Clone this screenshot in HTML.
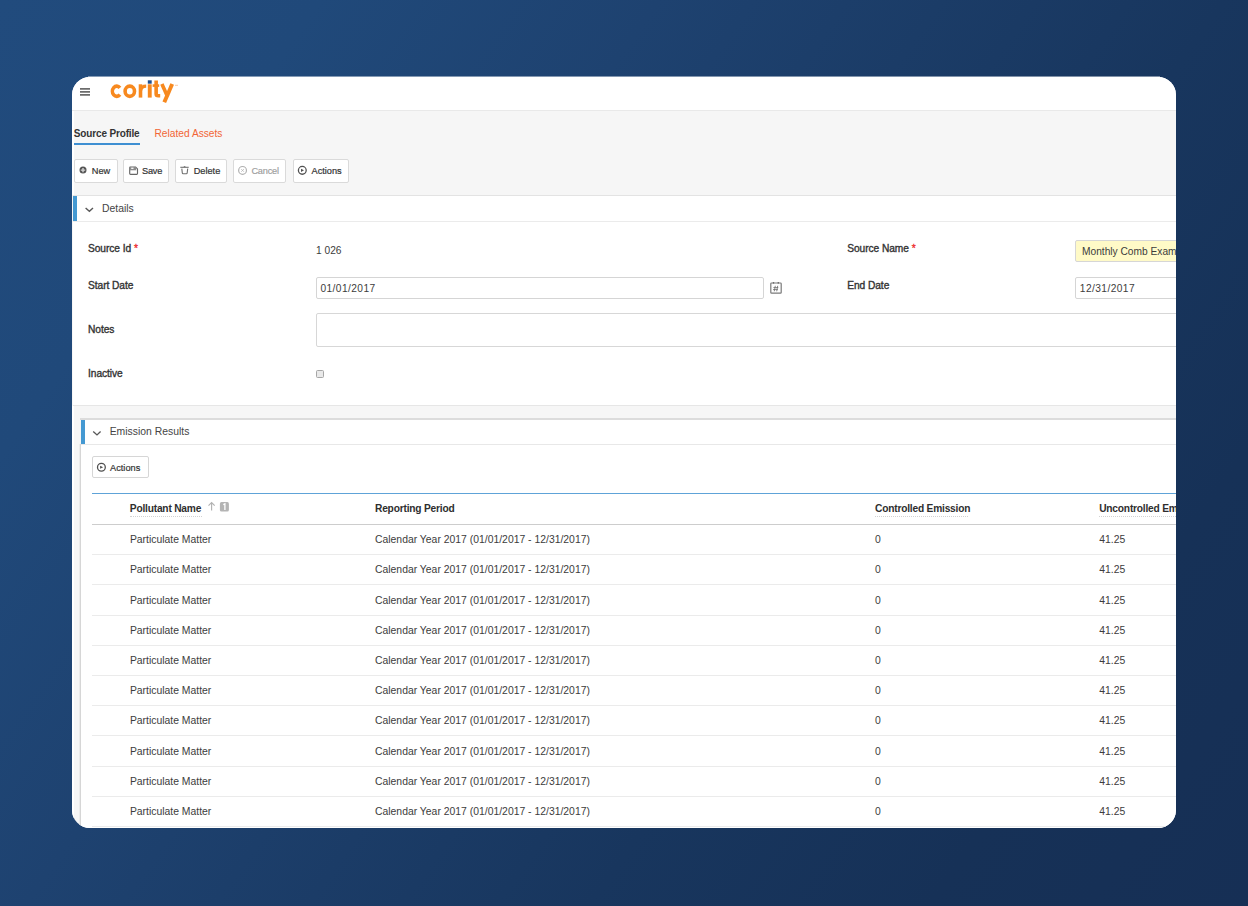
<!DOCTYPE html>
<html><head><meta charset="utf-8">
<style>
html,body{margin:0;padding:0;}
body{width:1248px;height:906px;overflow:hidden;position:relative;
background:linear-gradient(125deg,rgb(33,75,125) 0%,rgb(32,73,122) 17%,rgb(30,66,112) 35%,rgb(24,54,94) 65%,rgb(22,49,87) 83%,rgb(22,47,85) 100%);
font-family:"Liberation Sans",sans-serif;}
.card{position:absolute;left:72px;top:77px;width:1104px;height:751px;border-radius:18px;overflow:hidden;background:#f6f6f6;}
.t{position:absolute;white-space:nowrap;line-height:1;}
.r{position:absolute;}
.ov{position:absolute;left:0;top:0;}
.req{color:#ee2c2c;-webkit-text-stroke:0.3px #ee2c2c;}
</style></head><body>
<div class="card">
<div class="r" style="left:0.00px;top:0.00px;width:1104.00px;height:32.50px;background:#fff;"></div>
<div class="r" style="left:0.00px;top:32.50px;width:1104.00px;height:1.00px;background:#e9e9e9;"></div>
<div class="r" style="left:0.00px;top:33.50px;width:1.80px;height:84.50px;background:#fff;"></div>
<div class="r" style="left:0.00px;top:329.00px;width:1.80px;height:422.00px;background:#fff;"></div>
<div class="t" style="left:1.80px;top:52.44px;font-size:10.0px;color:#333;font-weight:bold;letter-spacing:-0.15px;">Source Profile</div>
<div class="r" style="left:1.50px;top:66.00px;width:66.00px;height:2.00px;background:#3e8fd2;"></div>
<div class="t" style="left:82.50px;top:52.27px;font-size:10.2px;color:#f26535;font-weight:normal;">Related Assets</div>
<div class="r" style="left:1.50px;top:82.00px;width:44.00px;height:24.00px;background:#fff;border:1px solid #dadada;border-radius:2px;box-sizing:border-box;"></div>
<div class="r" style="left:51.00px;top:82.00px;width:45.50px;height:24.00px;background:#fff;border:1px solid #dadada;border-radius:2px;box-sizing:border-box;"></div>
<div class="r" style="left:103.00px;top:82.00px;width:51.70px;height:24.00px;background:#fff;border:1px solid #dadada;border-radius:2px;box-sizing:border-box;"></div>
<div class="r" style="left:161.30px;top:82.00px;width:52.70px;height:24.00px;background:#fff;border:1px solid #dadada;border-radius:2px;box-sizing:border-box;"></div>
<div class="r" style="left:221.00px;top:82.00px;width:55.70px;height:24.00px;background:#fff;border:1px solid #dadada;border-radius:2px;box-sizing:border-box;"></div>
<div class="t" style="left:19.80px;top:90.01px;font-size:9.2px;color:#333;font-weight:normal;-webkit-text-stroke:0.2px #333;">New</div>
<div class="t" style="left:70.00px;top:90.01px;font-size:9.2px;color:#333;font-weight:normal;letter-spacing:-0.2px;-webkit-text-stroke:0.2px #333;">Save</div>
<div class="t" style="left:121.70px;top:90.01px;font-size:9.2px;color:#333;font-weight:normal;-webkit-text-stroke:0.2px #333;">Delete</div>
<div class="t" style="left:179.40px;top:90.01px;font-size:9.2px;color:#9c9c9c;font-weight:normal;letter-spacing:-0.2px;-webkit-text-stroke:0.15px #9c9c9c;">Cancel</div>
<div class="t" style="left:239.50px;top:90.01px;font-size:9.2px;color:#333;font-weight:normal;-webkit-text-stroke:0.2px #333;">Actions</div>
<div class="r" style="left:1.00px;top:118.00px;width:1103.00px;height:1.00px;background:#e3e3e3;"></div>
<div class="r" style="left:1.00px;top:119.00px;width:1103.00px;height:25.00px;background:#fff;"></div>
<div class="r" style="left:1.00px;top:119.00px;width:4.00px;height:25.00px;background:#4499d2;"></div>
<div class="r" style="left:1.00px;top:144.00px;width:1103.00px;height:1.00px;background:#ebebeb;"></div>
<div class="t" style="left:30.00px;top:127.00px;font-size:10.4px;color:#444;font-weight:normal;">Details</div>
<div class="r" style="left:1.00px;top:145.00px;width:1103.00px;height:183.00px;background:#fff;"></div>
<div class="r" style="left:1.00px;top:328.00px;width:1103.00px;height:1.00px;background:#e6e6e6;"></div>
<div class="t" style="left:16.00px;top:166.97px;font-size:10.2px;color:#333;font-weight:normal;-webkit-text-stroke:0.35px #333;letter-spacing:-0.05px;">Source Id <span class="req">*</span></div>
<div class="t" style="left:244.00px;top:168.67px;font-size:10.2px;color:#3c3c3c;font-weight:normal;">1 026</div>
<div class="t" style="left:775.20px;top:166.97px;font-size:10.2px;color:#333;font-weight:normal;-webkit-text-stroke:0.35px #333;letter-spacing:-0.05px;">Source Name <span class="req">*</span></div>
<div class="r" style="left:1003.40px;top:163.20px;width:124.60px;height:21.80px;background:#fffac7;border:1px solid #d6d6d6;border-radius:2px;box-sizing:border-box;"></div>
<div class="t" style="left:1010.00px;top:170.17px;font-size:10.2px;color:#3c3c3c;font-weight:normal;">Monthly Comb Example</div>
<div class="t" style="left:16.00px;top:203.67px;font-size:10.2px;color:#333;font-weight:normal;-webkit-text-stroke:0.35px #333;letter-spacing:-0.05px;">Start Date</div>
<div class="r" style="left:244.00px;top:200.00px;width:448.00px;height:22.00px;background:#fff;border:1px solid #d5d5d5;border-radius:2px;box-sizing:border-box;"></div>
<div class="t" style="left:248.40px;top:206.67px;font-size:10.2px;color:#3c3c3c;font-weight:normal;letter-spacing:0.42px;">01/01/2017</div>
<div class="t" style="left:775.20px;top:203.67px;font-size:10.2px;color:#333;font-weight:normal;-webkit-text-stroke:0.35px #333;letter-spacing:-0.05px;">End Date</div>
<div class="r" style="left:1003.40px;top:200.00px;width:124.60px;height:22.00px;background:#fff;border:1px solid #d5d5d5;border-radius:2px;box-sizing:border-box;"></div>
<div class="t" style="left:1007.80px;top:206.67px;font-size:10.2px;color:#3c3c3c;font-weight:normal;letter-spacing:0.42px;">12/31/2017</div>
<div class="t" style="left:16.00px;top:247.77px;font-size:10.2px;color:#333;font-weight:normal;-webkit-text-stroke:0.35px #333;letter-spacing:-0.05px;">Notes</div>
<div class="r" style="left:243.50px;top:236.40px;width:884.50px;height:33.60px;background:#fff;border:1px solid #d7d7d7;border-radius:2px;box-sizing:border-box;"></div>
<div class="t" style="left:16.00px;top:292.17px;font-size:10.2px;color:#333;font-weight:normal;-webkit-text-stroke:0.35px #333;letter-spacing:-0.05px;">Inactive</div>
<div class="r" style="left:244.00px;top:293.00px;width:8.00px;height:8.00px;background:#e9e9e9;border:1px solid #a6a6a6;border-radius:1.5px;box-sizing:border-box;"></div>
<div class="r" style="left:9.00px;top:343.00px;width:1095.00px;height:408.00px;background:#fff;"></div>
<div class="r" style="left:8.00px;top:341.00px;width:1096.00px;height:2.00px;background:#dcdcdc;"></div>
<div class="r" style="left:8.00px;top:367.00px;width:1.00px;height:384.00px;background:#d6d6d6;"></div>
<div class="r" style="left:7.00px;top:367.00px;width:1.00px;height:384.00px;background:#ebebeb;"></div>
<div class="r" style="left:9.00px;top:343.00px;width:4.00px;height:24.00px;background:#4499d2;"></div>
<div class="r" style="left:9.00px;top:367.00px;width:1095.00px;height:1.00px;background:#e8e8e8;"></div>
<div class="t" style="left:37.70px;top:350.30px;font-size:10.4px;color:#444;font-weight:normal;">Emission Results</div>
<div class="r" style="left:20.00px;top:379.20px;width:56.60px;height:22.20px;background:#fff;border:1px solid #d6d6d6;border-radius:2px;box-sizing:border-box;"></div>
<div class="t" style="left:38.10px;top:386.51px;font-size:9.2px;color:#333;font-weight:normal;-webkit-text-stroke:0.2px #333;">Actions</div>
<div class="r" style="left:20.00px;top:416.00px;width:1084.00px;height:1.00px;background:#5ea3d8;"></div>
<div class="t" style="left:57.80px;top:426.97px;font-size:10.2px;color:#2e2e2e;font-weight:bold;letter-spacing:-0.2px;">Pollutant Name</div>
<div class="r" style="left:57.80px;top:438.80px;width:71.90px;height:1.00px;border-top:1px dotted #d2d2d2;box-sizing:border-box;"></div>
<div class="t" style="left:303.00px;top:426.97px;font-size:10.2px;color:#2e2e2e;font-weight:bold;letter-spacing:-0.2px;">Reporting Period</div>
<div class="t" style="left:803.00px;top:426.97px;font-size:10.2px;color:#2e2e2e;font-weight:bold;letter-spacing:-0.2px;">Controlled Emission</div>
<div class="r" style="left:803.00px;top:438.80px;width:92.70px;height:1.00px;border-top:1px dotted #d2d2d2;box-sizing:border-box;"></div>
<div class="t" style="left:1027.20px;top:426.97px;font-size:10.2px;color:#2e2e2e;font-weight:bold;letter-spacing:-0.2px;">Uncontrolled Emission</div>
<div class="r" style="left:1027.20px;top:438.80px;width:90.80px;height:1.00px;border-top:1px dotted #d2d2d2;box-sizing:border-box;"></div>
<div class="r" style="left:20.00px;top:447.00px;width:1084.00px;height:1.20px;background:#cdcdcd;"></div>
<div class="t" style="left:57.90px;top:458.20px;font-size:10.4px;color:#3c3c3c;font-weight:normal;">Particulate Matter</div>
<div class="t" style="left:303.00px;top:458.20px;font-size:10.4px;color:#3c3c3c;font-weight:normal;">Calendar Year 2017 (01/01/2017 - 12/31/2017)</div>
<div class="t" style="left:803.00px;top:458.20px;font-size:10.4px;color:#3c3c3c;font-weight:normal;">0</div>
<div class="t" style="left:1027.20px;top:458.20px;font-size:10.4px;color:#3c3c3c;font-weight:normal;">41.25</div>
<div class="r" style="left:20.00px;top:477.20px;width:1084.00px;height:1.00px;background:#ebebeb;"></div>
<div class="t" style="left:57.90px;top:488.39px;font-size:10.4px;color:#3c3c3c;font-weight:normal;">Particulate Matter</div>
<div class="t" style="left:303.00px;top:488.39px;font-size:10.4px;color:#3c3c3c;font-weight:normal;">Calendar Year 2017 (01/01/2017 - 12/31/2017)</div>
<div class="t" style="left:803.00px;top:488.39px;font-size:10.4px;color:#3c3c3c;font-weight:normal;">0</div>
<div class="t" style="left:1027.20px;top:488.39px;font-size:10.4px;color:#3c3c3c;font-weight:normal;">41.25</div>
<div class="r" style="left:20.00px;top:507.39px;width:1084.00px;height:1.00px;background:#ebebeb;"></div>
<div class="t" style="left:57.90px;top:518.58px;font-size:10.4px;color:#3c3c3c;font-weight:normal;">Particulate Matter</div>
<div class="t" style="left:303.00px;top:518.58px;font-size:10.4px;color:#3c3c3c;font-weight:normal;">Calendar Year 2017 (01/01/2017 - 12/31/2017)</div>
<div class="t" style="left:803.00px;top:518.58px;font-size:10.4px;color:#3c3c3c;font-weight:normal;">0</div>
<div class="t" style="left:1027.20px;top:518.58px;font-size:10.4px;color:#3c3c3c;font-weight:normal;">41.25</div>
<div class="r" style="left:20.00px;top:537.58px;width:1084.00px;height:1.00px;background:#ebebeb;"></div>
<div class="t" style="left:57.90px;top:548.77px;font-size:10.4px;color:#3c3c3c;font-weight:normal;">Particulate Matter</div>
<div class="t" style="left:303.00px;top:548.77px;font-size:10.4px;color:#3c3c3c;font-weight:normal;">Calendar Year 2017 (01/01/2017 - 12/31/2017)</div>
<div class="t" style="left:803.00px;top:548.77px;font-size:10.4px;color:#3c3c3c;font-weight:normal;">0</div>
<div class="t" style="left:1027.20px;top:548.77px;font-size:10.4px;color:#3c3c3c;font-weight:normal;">41.25</div>
<div class="r" style="left:20.00px;top:567.77px;width:1084.00px;height:1.00px;background:#ebebeb;"></div>
<div class="t" style="left:57.90px;top:578.96px;font-size:10.4px;color:#3c3c3c;font-weight:normal;">Particulate Matter</div>
<div class="t" style="left:303.00px;top:578.96px;font-size:10.4px;color:#3c3c3c;font-weight:normal;">Calendar Year 2017 (01/01/2017 - 12/31/2017)</div>
<div class="t" style="left:803.00px;top:578.96px;font-size:10.4px;color:#3c3c3c;font-weight:normal;">0</div>
<div class="t" style="left:1027.20px;top:578.96px;font-size:10.4px;color:#3c3c3c;font-weight:normal;">41.25</div>
<div class="r" style="left:20.00px;top:597.96px;width:1084.00px;height:1.00px;background:#ebebeb;"></div>
<div class="t" style="left:57.90px;top:609.15px;font-size:10.4px;color:#3c3c3c;font-weight:normal;">Particulate Matter</div>
<div class="t" style="left:303.00px;top:609.15px;font-size:10.4px;color:#3c3c3c;font-weight:normal;">Calendar Year 2017 (01/01/2017 - 12/31/2017)</div>
<div class="t" style="left:803.00px;top:609.15px;font-size:10.4px;color:#3c3c3c;font-weight:normal;">0</div>
<div class="t" style="left:1027.20px;top:609.15px;font-size:10.4px;color:#3c3c3c;font-weight:normal;">41.25</div>
<div class="r" style="left:20.00px;top:628.15px;width:1084.00px;height:1.00px;background:#ebebeb;"></div>
<div class="t" style="left:57.90px;top:639.34px;font-size:10.4px;color:#3c3c3c;font-weight:normal;">Particulate Matter</div>
<div class="t" style="left:303.00px;top:639.34px;font-size:10.4px;color:#3c3c3c;font-weight:normal;">Calendar Year 2017 (01/01/2017 - 12/31/2017)</div>
<div class="t" style="left:803.00px;top:639.34px;font-size:10.4px;color:#3c3c3c;font-weight:normal;">0</div>
<div class="t" style="left:1027.20px;top:639.34px;font-size:10.4px;color:#3c3c3c;font-weight:normal;">41.25</div>
<div class="r" style="left:20.00px;top:658.34px;width:1084.00px;height:1.00px;background:#ebebeb;"></div>
<div class="t" style="left:57.90px;top:669.53px;font-size:10.4px;color:#3c3c3c;font-weight:normal;">Particulate Matter</div>
<div class="t" style="left:303.00px;top:669.53px;font-size:10.4px;color:#3c3c3c;font-weight:normal;">Calendar Year 2017 (01/01/2017 - 12/31/2017)</div>
<div class="t" style="left:803.00px;top:669.53px;font-size:10.4px;color:#3c3c3c;font-weight:normal;">0</div>
<div class="t" style="left:1027.20px;top:669.53px;font-size:10.4px;color:#3c3c3c;font-weight:normal;">41.25</div>
<div class="r" style="left:20.00px;top:688.53px;width:1084.00px;height:1.00px;background:#ebebeb;"></div>
<div class="t" style="left:57.90px;top:699.72px;font-size:10.4px;color:#3c3c3c;font-weight:normal;">Particulate Matter</div>
<div class="t" style="left:303.00px;top:699.72px;font-size:10.4px;color:#3c3c3c;font-weight:normal;">Calendar Year 2017 (01/01/2017 - 12/31/2017)</div>
<div class="t" style="left:803.00px;top:699.72px;font-size:10.4px;color:#3c3c3c;font-weight:normal;">0</div>
<div class="t" style="left:1027.20px;top:699.72px;font-size:10.4px;color:#3c3c3c;font-weight:normal;">41.25</div>
<div class="r" style="left:20.00px;top:718.72px;width:1084.00px;height:1.00px;background:#ebebeb;"></div>
<div class="t" style="left:57.90px;top:729.91px;font-size:10.4px;color:#3c3c3c;font-weight:normal;">Particulate Matter</div>
<div class="t" style="left:303.00px;top:729.91px;font-size:10.4px;color:#3c3c3c;font-weight:normal;">Calendar Year 2017 (01/01/2017 - 12/31/2017)</div>
<div class="t" style="left:803.00px;top:729.91px;font-size:10.4px;color:#3c3c3c;font-weight:normal;">0</div>
<div class="t" style="left:1027.20px;top:729.91px;font-size:10.4px;color:#3c3c3c;font-weight:normal;">41.25</div>
<div class="r" style="left:20.00px;top:748.91px;width:1084.00px;height:1.00px;background:#ebebeb;"></div>

</div>
<div style="position:absolute;left:88px;top:76px;width:1072px;height:1px;background:rgba(255,255,255,0.45);"></div>
<svg class="ov" width="1248" height="906" viewBox="0 0 1248 906">
<g fill="none" stroke="#f7891f" stroke-width="3.6" stroke-linecap="butt">
<path d="M119.9 87.8 A4.3 5.1 0 1 0 119.9 94.7"/>
<ellipse cx="129.8" cy="91.25" rx="4.7" ry="5.1"/>
<path d="M140.5 97.6 V84.3"/>
<path d="M140.6 90.5 Q141.2 86.2 146.2 86.2" stroke-width="3.2"/>
<path d="M149.75 97.6 V84.3" stroke-width="3.9"/>
<path d="M156.15 80.6 V94 Q156.15 95.8 158.2 95.8 H160.2"/>
<path d="M152.6 85.6 H159.2" stroke-width="2.6"/>
<path d="M161.9 84.0 L167.6 96.8"/>
<path d="M172.2 84.0 L164.3 102.3" stroke-width="3.9"/>
</g>
<rect x="147.8" y="80.3" width="3.9" height="3.4" fill="#1e4f8f"/>
<path d="M175 85.3h3" stroke="#f9b27a" stroke-width="0.7"/>
<!-- icons -->
<path d="M80 88.9h10M80 91.9h10M80 94.9h10" stroke="#6c6c6c" stroke-width="1.6"/>
<circle cx="83.0" cy="170.1" r="3.5" fill="#555"/>
<path d="M83.0 167.9v4.4M80.8 170.1h4.4" stroke="#d4d4d4" stroke-width="1.4"/>
<path d="M129.7 167.0h5.9l1.9 1.9v4.6q0 0.8-0.8 0.8h-6.2q-0.8 0-0.8-0.8v-5.7q0-0.8 0.8-0.8z" fill="none" stroke="#666" stroke-width="1.15"/>
<rect x="129.6" y="167.0" width="6.6" height="3.3" fill="#8c8c8c"/>
<rect x="131.2" y="167.6" width="2.3" height="1.4" fill="#f4f4f4"/>

<path d="M180.3 167.3h8.4" stroke="#707070" stroke-width="1.1"/>
<path d="M183.8 166.7h1.6" stroke="#707070" stroke-width="1.0"/>
<path d="M181.8 168.6l0.5 4.3q0.1 0.8 0.9 0.8h3.1q0.8 0 0.9-0.8l0.5-4.3" fill="none" stroke="#707070" stroke-width="1.1"/>
<circle cx="242.55" cy="170.4" r="3.9" fill="none" stroke="#b0b0b0" stroke-width="1.2"/>
<path d="M241.3 169.2l2.5 2.5M243.8 169.2l-2.5 2.5" stroke="#b8b8b8" stroke-width="0.9"/>
<circle cx="302.3" cy="170.35" r="3.9" fill="none" stroke="#505050" stroke-width="1.3"/>
<path d="M301.0 168.8l3.0 1.55l-3.0 1.55z" fill="#505050"/>
<circle cx="101.4" cy="467.3" r="3.9" fill="none" stroke="#505050" stroke-width="1.3"/>
<path d="M100.1 465.75l3.0 1.55l-3.0 1.55z" fill="#505050"/>
<path d="M85.6 207.9l3.8 3.4l3.6-3.3" fill="none" stroke="#585858" stroke-width="1.4"/>
<path d="M93.2 431.5l3.8 3.4l3.6-3.3" fill="none" stroke="#585858" stroke-width="1.4"/>
<rect x="770.8" y="283.0" width="10.4" height="10.2" rx="0.8" fill="none" stroke="#7a7a7a" stroke-width="1.2"/>
<path d="M773.5 282.2v1.4M778.3 282.2v1.4" stroke="#555" stroke-width="1.3"/>
<path d="M775.3 285.8L774.3 291.3M777.7 285.8L776.7 291.3M773.4 287.6H778.3M773.0 289.6H777.9" stroke="#6a6a6a" stroke-width="0.8" fill="none"/>
<path d="M211.6 510.6V502.8M208.5 505.6l3.1-3.0l3.1 3.0" fill="none" stroke="#b2b2b2" stroke-width="1.15"/>
<rect x="219.9" y="502.1" width="9" height="9.4" rx="1.6" fill="#b4b4b4"/>
<path d="M223.3 504.6l1.6-0.8v6.2" fill="none" stroke="#fff" stroke-width="1.3"/>
</svg>
</body></html>
